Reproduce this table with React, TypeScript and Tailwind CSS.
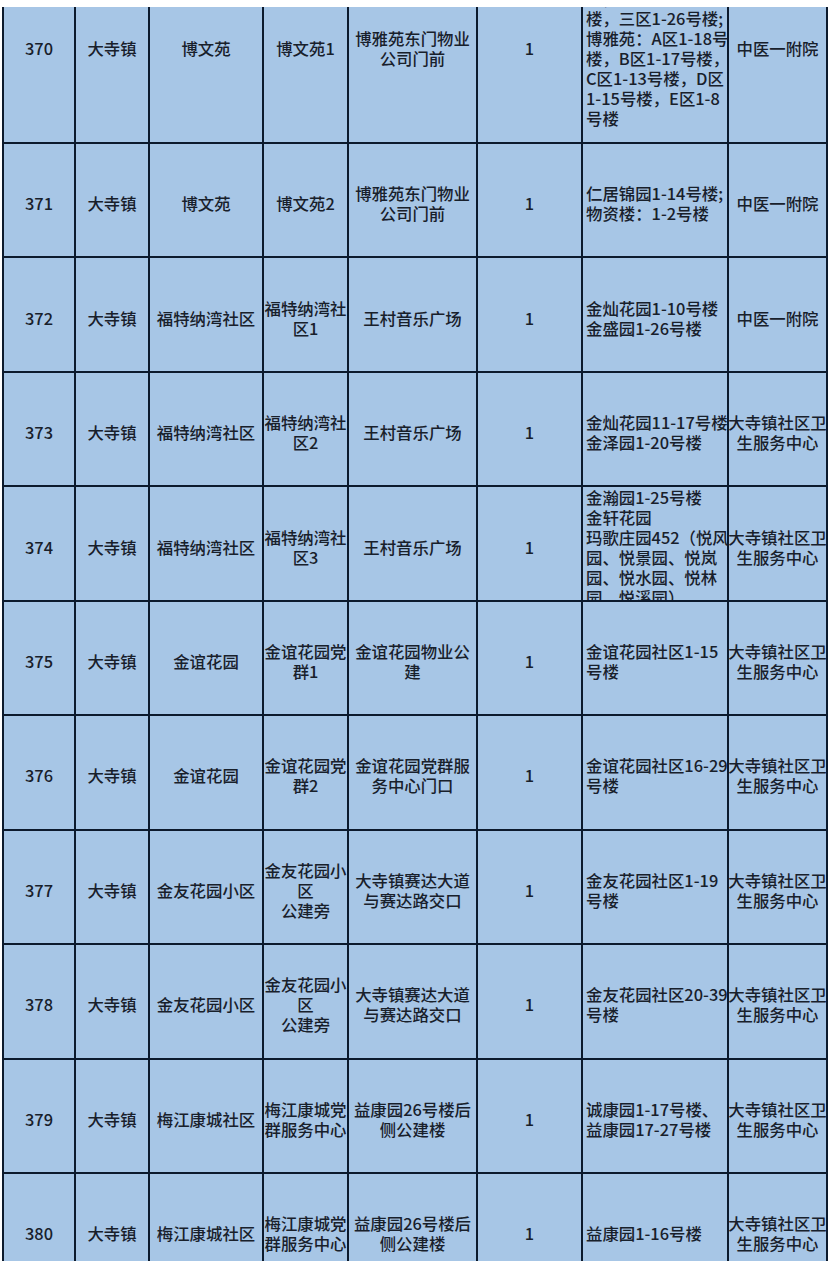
import React from "react";

type Row = {
  no: string;
  town: string;
  area: string;
  point: string[];
  place: string[];
  count: string;
  scope: string[];
  hospital: string[];
};

const wei = ["大寺镇社区卫", "生服务中心"];

const rows: Row[] = [
  {
    no: "370",
    town: "大寺镇",
    area: "博文苑",
    point: ["博文苑1"],
    place: ["博雅苑东门物业", "公司门前"],
    count: "1",
    scope: [
      "博文苑：一区1-24号",
      "楼，二区1-30号",
      "楼，三区1-26号楼;",
      "博雅苑：A区1-18号",
      "楼，B区1-17号楼，",
      "C区1-13号楼，D区",
      "1-15号楼，E区1-8",
      "号楼",
    ],
    hospital: ["中医一附院"],
  },
  {
    no: "371",
    town: "大寺镇",
    area: "博文苑",
    point: ["博文苑2"],
    place: ["博雅苑东门物业", "公司门前"],
    count: "1",
    scope: ["仁居锦园1-14号楼;", "物资楼：1-2号楼"],
    hospital: ["中医一附院"],
  },
  {
    no: "372",
    town: "大寺镇",
    area: "福特纳湾社区",
    point: ["福特纳湾社", "区1"],
    place: ["王村音乐广场"],
    count: "1",
    scope: ["金灿花园1-10号楼", "金盛园1-26号楼"],
    hospital: ["中医一附院"],
  },
  {
    no: "373",
    town: "大寺镇",
    area: "福特纳湾社区",
    point: ["福特纳湾社", "区2"],
    place: ["王村音乐广场"],
    count: "1",
    scope: ["金灿花园11-17号楼", "金泽园1-20号楼"],
    hospital: wei,
  },
  {
    no: "374",
    town: "大寺镇",
    area: "福特纳湾社区",
    point: ["福特纳湾社", "区3"],
    place: ["王村音乐广场"],
    count: "1",
    scope: [
      "金瀚园1-25号楼",
      "金轩花园",
      "玛歌庄园452（悦风",
      "园、悦景园、悦岚",
      "园、悦水园、悦林",
      "园、悦溪园）",
    ],
    hospital: wei,
  },
  {
    no: "375",
    town: "大寺镇",
    area: "金谊花园",
    point: ["金谊花园党", "群1"],
    place: ["金谊花园物业公", "建"],
    count: "1",
    scope: ["金谊花园社区1-15", "号楼"],
    hospital: wei,
  },
  {
    no: "376",
    town: "大寺镇",
    area: "金谊花园",
    point: ["金谊花园党", "群2"],
    place: ["金谊花园党群服", "务中心门口"],
    count: "1",
    scope: ["金谊花园社区16-29", "号楼"],
    hospital: wei,
  },
  {
    no: "377",
    town: "大寺镇",
    area: "金友花园小区",
    point: ["金友花园小", "区", "公建旁"],
    place: ["大寺镇赛达大道", "与赛达路交口"],
    count: "1",
    scope: ["金友花园社区1-19", "号楼"],
    hospital: wei,
  },
  {
    no: "378",
    town: "大寺镇",
    area: "金友花园小区",
    point: ["金友花园小", "区", "公建旁"],
    place: ["大寺镇赛达大道", "与赛达路交口"],
    count: "1",
    scope: ["金友花园社区20-39", "号楼"],
    hospital: wei,
  },
  {
    no: "379",
    town: "大寺镇",
    area: "梅江康城社区",
    point: ["梅江康城党", "群服务中心"],
    place: ["益康园26号楼后", "侧公建楼"],
    count: "1",
    scope: ["诚康园1-17号楼、", "益康园17-27号楼"],
    hospital: wei,
  },
  {
    no: "380",
    town: "大寺镇",
    area: "梅江康城社区",
    point: ["梅江康城党", "群服务中心"],
    place: ["益康园26号楼后", "侧公建楼"],
    count: "1",
    scope: ["益康园1-16号楼"],
    hospital: wei,
  },
];

const Cell = ({ lines, left }: { lines: string[]; left?: boolean }) => (
  <div
    className={`border-r-2 border-b-2 border-[#0c1a2d] overflow-hidden flex items-center pt-[6px] ${
      left ? "justify-start pl-[3px]" : "justify-center"
    }`}
  >
    <div className={`flex flex-col ${left ? "items-start" : "items-center"}`}>
      {lines.map((l, i) => (
        <div key={i} className="whitespace-nowrap leading-[20px]">
          {l}
        </div>
      ))}
    </div>
  </div>
);

export default function App() {
  return (
    <div className="bg-white w-[834px] h-[1263px] pt-[7px] font-['Noto_Sans_CJK_SC',sans-serif] font-medium text-[16.4px] text-[#18202b]">
      <div className="h-[1254px] overflow-hidden ml-[2px] w-[826px]">
        <div className="-mt-[59px] grid grid-cols-[72px_74px_114px_85px_129px_105px_146px_99px] grid-rows-[196px_repeat(10,114.44px)] border-l-2 border-[#0c1a2d] bg-[#a7c6e6]">
          {rows.map((r) => (
            <React.Fragment key={r.no}>
              <Cell lines={[r.no]} />
              <Cell lines={[r.town]} />
              <Cell lines={[r.area]} />
              <Cell lines={r.point} />
              <Cell lines={r.place} />
              <Cell lines={[r.count]} />
              <Cell lines={r.scope} left />
              <Cell lines={r.hospital} />
            </React.Fragment>
          ))}
        </div>
      </div>
    </div>
  );
}
